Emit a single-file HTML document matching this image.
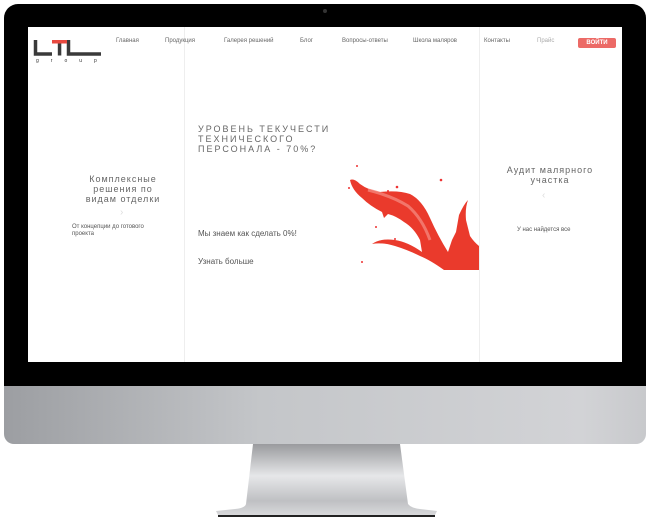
<!DOCTYPE html><html><head><meta charset="utf-8"><style>
body{margin:0;width:650px;height:519px;background:#fff;position:relative;overflow:hidden;font-family:"Liberation Sans","Noto Sans CJK SC",sans-serif}
.a{position:absolute}
.nav{font-size:6px;color:#666;top:38px}
</style></head><body>
<div class="a" style="left:4px;top:4px;width:642px;height:386px;background:#000;border-radius:14px 14px 0 0"></div>
<div class="a" style="left:323px;top:9px;width:4px;height:4px;border-radius:50%;background:#333"></div>
<div class="a" style="left:4px;top:386px;width:642px;height:58px;background:linear-gradient(90deg,#9c9ea2,#c4c6c9 40%,#d2d3d6 90%,#c8c9cc);border-radius:0 0 10px 10px"></div>
<svg class="a" style="left:215px;top:444px" width="222" height="75"><defs><linearGradient id="g" x1="0" y1="0" x2="0" y2="1"><stop offset="0" stop-color="#9a9b9e"/><stop offset=".45" stop-color="#e6e7e9"/><stop offset=".8" stop-color="#bfc0c3"/><stop offset="1" stop-color="#d8d9db"/></linearGradient></defs><path d="M38 0H185L193 60Q196 64 205 65L222 67L220 71H3L1 67L20 65Q30 64 31 60Z" fill="url(#g)"/><rect x="3" y="71" width="217" height="2" fill="#222"/></svg>
<div class="a" style="left:28px;top:27px;width:594px;height:335px;background:#fff"></div>
<div class="a" style="left:184px;top:27px;width:1px;height:335px;background:#eee"></div>
<div class="a" style="left:479px;top:27px;width:1px;height:335px;background:#eee"></div>
<svg class="a" style="left:33px;top:39px" width="70" height="26"><path d="M2.5 1V15H19M35.5 1V15H68" stroke="#3a3a3a" stroke-width="3.5" fill="none"/><rect x="19" y="1" width="15" height="3.5" fill="#e8493f"/><rect x="24.8" y="4.5" width="3.5" height="12" fill="#3a3a3a"/><text x="3" y="23" font-size="5" fill="#333" letter-spacing="12">group</text></svg>
<div class="a nav" style="left:116px">Главная</div>
<div class="a nav" style="left:165px">Продукция</div>
<div class="a nav" style="left:224px">Галерея решений</div>
<div class="a nav" style="left:300px">Блог</div>
<div class="a nav" style="left:342px">Вопросы-ответы</div>
<div class="a nav" style="left:413px">Школа маляров</div>
<div class="a nav" style="left:484px">Контакты</div>
<div class="a nav" style="left:537px;color:#aaa">Прайс</div>
<div class="a" style="left:578px;top:38px;width:38px;height:10px;background:#ec6a66;border-radius:2px;color:#fff;font-size:6px;font-weight:bold;text-align:center;line-height:10px">ВОЙТИ</div>
<div class="a" style="left:76px;top:174px;width:94px;text-align:center;font-size:9px;color:#666;letter-spacing:1px;line-height:10px">Комплексные решения по видам отделки</div>
<div class="a" style="left:120px;top:207px;font-size:10px;color:#ddd">›</div>
<div class="a" style="left:72px;top:224px;width:95px;font-size:6px;color:#555;line-height:7px">От концепции до готового проекта</div>
<div class="a" style="left:198px;top:124px;width:170px;font-size:9px;color:#666;letter-spacing:2px;line-height:10px">УРОВЕНЬ ТЕКУЧЕСТИ ТЕХНИЧЕСКОГО ПЕРСОНАЛА - 70%?</div>
<div class="a" style="left:198px;top:229px;font-size:8px;color:#555">Мы знаем как сделать 0%!</div>
<div class="a" style="left:198px;top:257px;font-size:8px;color:#555">Узнать больше</div>
<svg class="a" style="left:340px;top:160px" width="140" height="110"><path d="M10 20Q14 18 20 24Q28 30 40 32Q58 30 70 34Q82 40 90 58Q98 76 108 92L112 80L116 72L119 55Q124 44 128 40Q125 48 126 60L130 76Q134 82 139 86V110H104Q90 100 80 96Q68 90 55 86Q42 82 32 84Q40 78 55 80Q68 82 82 92L80 80Q74 68 64 62Q56 56 48 54L44 58L42 52Q30 46 22 38Q12 30 10 20Z" fill="#ea3a2c"/><path d="M28 30Q52 36 68 46Q82 58 90 80" stroke="#f4857a" stroke-width="3" fill="none" opacity=".8"/><circle cx="17" cy="6" r="1" fill="#e33"/><circle cx="48" cy="31" r="1" fill="#e33"/><circle cx="57" cy="27" r="1.3" fill="#e33"/><circle cx="101" cy="20" r="1.3" fill="#e33"/><circle cx="9" cy="28" r="1" fill="#e33"/><circle cx="55" cy="79" r="1" fill="#e33"/><circle cx="36" cy="67" r="1" fill="#e33"/><circle cx="22" cy="102" r="1" fill="#e33"/></svg>
<div class="a" style="left:490px;top:165px;width:120px;text-align:center;font-size:9px;color:#666;letter-spacing:1px;line-height:10px">Аудит малярного участка</div>
<div class="a" style="left:542px;top:190px;font-size:10px;color:#ddd">‹</div>
<div class="a" style="left:517px;top:227px;font-size:6px;color:#555">У нас найдется все</div>
</body></html>
